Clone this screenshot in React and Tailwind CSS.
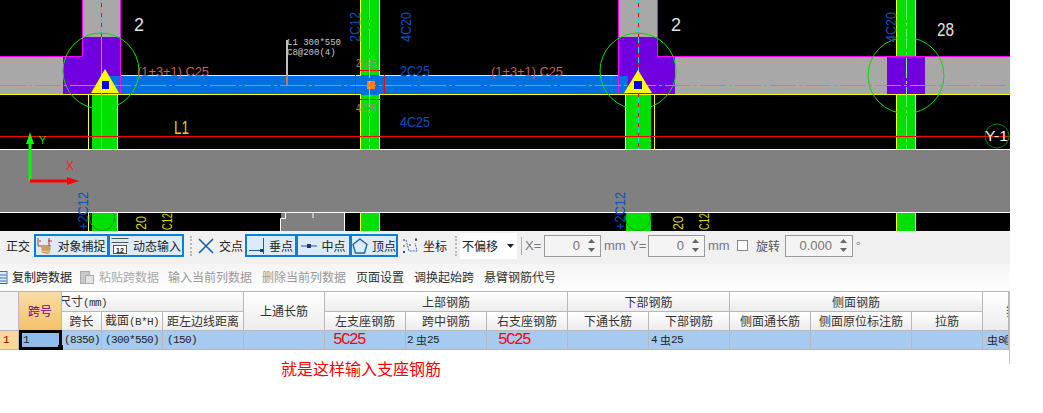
import React from 'react';

const cad = 'Liberation Sans, sans-serif';
const mono = 'Liberation Mono, monospace';

// 柱子: 绿色填充 + 黄色边线
function Column({ x, w, fx, fw, y1, y2, yl = true, yr = true }) {
  return (
    <g>
      <rect x={fx} y={y1} width={fw} height={y2 - y1} fill="#00e000" />
      {yl && <line x1={x + 0.5} y1={y1} x2={x + 0.5} y2={y2} stroke="#ffff00" />}
      {yr && <line x1={x + w + 0.5} y1={y1} x2={x + w + 0.5} y2={y2} stroke="#ffff00" />}
    </g>
  );
}

function Vtext({ x, y, fill, size = 14, len, children }) {
  return (
    <text transform={`translate(${x} ${y}) rotate(-90)`} fill={fill} fontSize={size} fontFamily={cad} textLength={len} lengthAdjust="spacingAndGlyphs">{children}</text>
  );
}

function Htext({ x, y, fill, size, len, children }) {
  return (
    <text x={x} y={y} fill={fill} fontSize={size} fontFamily={cad} textLength={len} lengthAdjust="spacingAndGlyphs">{children}</text>
  );
}

function Canvas() {
  return (
    <svg width="1010" height="231" viewBox="0 0 1010 231" className="block shrink-0">
      <rect width="1010" height="231" fill="#000" />

      {/* 灰色梁 */}
      <rect x="0" y="57" width="63" height="37" fill="#a8a8a8" />
      <rect x="675" y="57" width="335" height="37" fill="#a8a8a8" />
      <rect x="83" y="0" width="37" height="37" fill="#a8a8a8" />
      <rect x="618" y="0" width="39" height="37" fill="#a8a8a8" />

      {/* 柱 */}
      <Column x={88} w={29} fx={92} fw={26} y1={95} y2={149} />
      <Column x={360} w={19} fx={360} fw={20} y1={0} y2={76} />
      <Column x={360} w={19} fx={360} fw={20} y1={94} y2={149} />
      <Column x={625} w={29} fx={626} fw={25} y1={95} y2={149} />
      <Column x={896} w={19} fx={896} fw={20} y1={0} y2={56} />
      <Column x={896} w={19} fx={896} fw={20} y1={95} y2={149} />

      {/* 蓝色梁 */}
      <rect x="108" y="76" width="510" height="18" fill="#0070e0" />
      <line x1="120" y1="75.5" x2="618" y2="75.5" stroke="#ffff00" />

      {/* 紫色支座 */}
      <path d="M83 37H120V76H108V94H63V57H83Z" fill="#7000e0" />
      <path d="M618 37H657V56H675V94H618Z" fill="#7000e0" />
      <rect x="618" y="76" width="10" height="18" fill="#0070e0" />
      <rect x="887" y="57" width="38" height="37" fill="#7000e0" />

      {/* 洋红边线 */}
      <path d="M0 56.5H82.5V0M120.5 0V94" fill="none" stroke="#ff00ff" />
      <path d="M618.5 0V94.5H675.5M657.5 0V56.5H1010" fill="none" stroke="#ff00ff" />

      <line x1="0" y1="94.5" x2="1010" y2="94.5" stroke="#ffff00" />
      <rect x="361" y="75" width="18" height="20" fill="#0070e0" />

      {/* 跨中支座红线 */}
      <path d="M355.5 75V94M384.5 75V94M360 70.5H380M360 99.5H380" stroke="#ff0000" fill="none" />
      <rect x="367" y="81" width="8" height="8" fill="#ff8020" />

      {/* 轴线 */}
      <line x1="0" y1="85.5" x2="1010" y2="85.5" stroke="#00ff00" strokeDasharray="26 3 3 3" />
      <line x1="369.5" y1="0" x2="369.5" y2="149" stroke="#70ff70" strokeDasharray="20 3 3 3" />
      <line x1="906.5" y1="0" x2="906.5" y2="149" stroke="#70ff70" strokeDasharray="20 3 3 3" />
      <line x1="101.5" y1="0" x2="101.5" y2="149" stroke="#00e0e0" />
      <line x1="638.5" y1="0" x2="638.5" y2="149" stroke="#00e0e0" />
      <line x1="101.5" y1="3" x2="101.5" y2="37" stroke="#ff0000" strokeDasharray="4 6" />
      <line x1="638.5" y1="3" x2="638.5" y2="149" stroke="#ff0000" strokeDasharray="4 6" />

      <line x1="0" y1="136.5" x2="1010" y2="136.5" stroke="#ff0000" />

      {/* 三角形标记 */}
      <path d="M105 69L119 93H91Z" fill="#ffff00" />
      <rect x="102" y="81" width="7" height="8" fill="#0000e0" />
      <path d="M638 70L652 93H624Z" fill="#ffff00" />
      <rect x="634" y="81" width="8" height="8" fill="#0000e0" />

      {/* 圆圈 */}
      <circle cx="101" cy="71" r="38" fill="none" stroke="#00e000" />
      <circle cx="638" cy="71" r="38" fill="none" stroke="#00e000" />
      <circle cx="906" cy="75.5" r="38" fill="none" stroke="#00e000" />
      <circle cx="997" cy="136" r="12" fill="none" stroke="#008000" />

      {/* 引线 */}
      <line x1="287" y1="40" x2="287" y2="75" stroke="#ffffff" strokeWidth="1.5" />
      <line x1="287" y1="75" x2="287" y2="85" stroke="#ff8020" strokeWidth="1.5" />

      {/* 底部柱 */}
      <Column x={88} w={29} fx={92} fw={26} y1={213} y2={231} />
      <Column x={360} w={19} fx={360} fw={20} y1={213} y2={231} />
      <Column x={625} w={29} fx={626} fw={25} y1={213} y2={231} yl={false} yr={false} />
      <Column x={896} w={19} fx={896} fw={20} y1={213} y2={231} />
      <circle cx="102" cy="218" r="12.5" fill="none" stroke="#00a000" />
      <circle cx="638" cy="218" r="12.5" fill="none" stroke="#00a000" />

      {/* 灰色带 */}
      <rect x="0" y="150" width="1010" height="62" fill="#808080" />
      <line x1="0" y1="149.5" x2="1010" y2="149.5" stroke="#fff" />
      <line x1="0" y1="212.5" x2="1010" y2="212.5" stroke="#fff" />
      <rect x="281" y="213" width="63" height="18" fill="#808080" />
      <path d="M280.5 231V218.5H285.5V213M313 213V218M344.5 213V231" stroke="#fff" fill="none" />

      {/* 坐标系 */}
      <line x1="30" y1="181" x2="30" y2="142" stroke="#00ff00" strokeWidth="3" />
      <path d="M30 132L34 144H26Z" fill="#00ff00" />
      <line x1="30" y1="181" x2="68" y2="181" stroke="#ff0000" strokeWidth="3" />
      <path d="M79 181L67 177V185Z" fill="#ff0000" />
      <text x="39" y="144" fontSize="11" fill="#00e000" fontFamily={cad}>Y</text>
      <text x="66" y="170" fontSize="12" fill="#ff2020" fontFamily={cad}>X</text>

      {/* 文字 */}
      <Htext x={134} y={31} size={18} fill="#e0e0e0">2</Htext>
      <Htext x={671} y={31} size={18} fill="#e0e0e0">2</Htext>
      <Htext x={937} y={36} size={18} fill="#e0e0e0" len={17}>28</Htext>
      <Htext x={174} y={134} size={18} fill="#d8d800" len={15}>L1</Htext>
      <Htext x={137} y={76} size={13} fill="#c86060" len={72}>(1+3+1) C25</Htext>
      <Htext x={491} y={76} size={13} fill="#c86060" len={72}>(1+3+1) C25</Htext>
      <text x="287" y="45" fontSize="9" fill="#c8c8c8" fontFamily={mono}>L1 300*550</text>
      <text x="287" y="55" fontSize="9" fill="#c8c8c8" fontFamily={mono}>C8@200(4)</text>
      <Htext x={400} y={76} size={14} fill="#0a50c0" len={30}>2C25</Htext>
      <Htext x={400} y={127} size={14} fill="#0a50c0" len={30}>4C25</Htext>
      <Htext x={356} y={67} size={10} fill="#909090" len={20}>2C25</Htext>
      <Htext x={356} y={112} size={10} fill="#909090" len={20}>4C25</Htext>
      <Vtext x={360} y={42} fill="#0a50c0" len={30}>2C12</Vtext>
      <Vtext x={411} y={42} fill="#0a50c0" len={30}>4C20</Vtext>
      <Vtext x={896} y={42} fill="#0a50c0" len={30}>4C20</Vtext>
      <Vtext x={88} y={230} fill="#0a50c0" len={38}>+2C12</Vtext>
      <Vtext x={625} y={230} fill="#0a50c0" len={38}>+2C12</Vtext>
      <Vtext x={146} y={230} fill="#d8d800" len={14}>20</Vtext>
      <Vtext x={683} y={230} fill="#d8d800" len={14}>20</Vtext>
      <Vtext x={172} y={230} fill="#d8d800" len={17}>C12</Vtext>
      <Vtext x={709} y={230} fill="#d8d800" len={17}>C12</Vtext>
      <Htext x={985} y={141} size={14} fill="#f0f0f0" len={23}>Y-1</Htext>
    </svg>
  );
}

// 工具栏图标
const IconSnap = () => (
  <svg width="16" height="18" viewBox="0 0 16 18">
    <path d="M1 1V9M2 4H4M12 1V9M11 4H15M1 9H14" stroke="#a04030" fill="none" />
    <path d="M4 9L9 8L14 11L12 17L5 16Z" fill="#c8a060" />
    <path d="M5 14L12 15" stroke="#e8d0a0" />
  </svg>
);
const IconInput = () => (
  <svg width="18" height="18" viewBox="0 0 18 18">
    <path d="M0.5 1.5H17.5M0.5 5.5H17.5" stroke="#555" fill="none" />
    <rect x="2.5" y="8.5" width="13" height="8" fill="#fff" stroke="#555" />
    <text x="5" y="15.5" fontSize="7" fill="#111" fontFamily={cad} fontWeight="bold">12</text>
  </svg>
);
const IconCross = () => (
  <svg width="16" height="16" viewBox="0 0 16 16">
    <path d="M1 1L15 15M15 1L1 15" stroke="#1060b0" strokeWidth="1.6" />
  </svg>
);
const IconPerp = () => (
  <svg width="16" height="18" viewBox="0 0 16 18">
    <path d="M0 13.5H15M14.5 1V17" stroke="#1a5aa0" fill="none" />
    <rect x="11" y="12" width="3" height="3" fill="#1a3a80" />
  </svg>
);
const IconMid = () => (
  <svg width="16" height="6" viewBox="0 0 16 6">
    <path d="M0 3H16" stroke="#1a5aa0" />
    <rect x="6" y="1" width="4" height="4" fill="#1a3a80" />
  </svg>
);
const IconVertex = () => (
  <svg width="16" height="16" viewBox="0 0 16 16">
    <path d="M8 1L15 6.5L12.5 15H3.5L1 6.5Z" fill="none" stroke="#1a6ab0" strokeWidth="1.4" />
  </svg>
);
const IconCoord = () => (
  <svg width="17" height="18" viewBox="0 0 17 18">
    <path d="M4 3L7 14H15L13 6" fill="none" stroke="#2070c0" strokeDasharray="2 1" />
    <path d="M1 3H3M1 9H3M1 15H3M14 1V3M7 8H9" stroke="#333" />
    <circle cx="14" cy="3" r="1" fill="#333" />
    <circle cx="2" cy="15" r="1" fill="#333" />
  </svg>
);
const IconCopy = () => (
  <svg width="8" height="13" viewBox="0 0 8 13" className="block">
    <rect x="-4" y="0.5" width="11" height="12" fill="#dfeaf8" stroke="#3a70b8" />
    <path d="M-2 4H6M-2 7H6M-2 10H6" stroke="#3a70b8" />
  </svg>
);
const IconPaste = () => (
  <svg width="14" height="14" viewBox="0 0 14 14" className="block">
    <rect x="0.5" y="1.5" width="9" height="12" fill="#c8c8c8" stroke="#aaa" />
    <rect x="5.5" y="5.5" width="8" height="8" fill="#e4e4e4" stroke="#aaa" />
  </svg>
);

function Toggle({ w, children }) {
  return (
    <div style={{ width: w }} className="h-[23px] shrink-0 flex items-center justify-center gap-[4px] whitespace-nowrap border-2 border-[#0a7fd6] bg-[#dcebf7] -ml-[1px] first:ml-0">
      {children}
    </div>
  );
}

function Spin({ w, value }) {
  return (
    <div style={{ width: w }} className="h-[22px] shrink-0 flex items-center justify-end border border-[#9a9a9a] bg-[#f4f4f4] text-[#777] pr-[3px]">
      <span className="text-[13px] [font-family:'Liberation_Sans',sans-serif]">{value}</span>
      <div className="w-[12px] ml-[5px] flex flex-col items-center gap-[5px]">
        <svg width="7" height="4" viewBox="0 0 7 4" className="block"><path d="M3.5 0L7 4H0Z" fill="#666" /></svg>
        <svg width="7" height="4" viewBox="0 0 7 4" className="block"><path d="M3.5 4L7 0H0Z" fill="#666" /></svg>
      </div>
    </div>
  );
}

const Grip = () => (
  <div className="w-[3px] h-[20px] shrink-0 border-l-2 border-dotted border-[#b8b8b8]" />
);

function Toolbar() {
  return (
    <div className="w-[1010px] h-[33px] shrink-0 flex items-center bg-[#f0f0f0] text-[12px] text-[#222] pb-[4px]">
      <span className="ml-[6px] w-[28px] shrink-0">正交</span>
      <div className="flex">
        <Toggle w={75}><IconSnap />对象捕捉</Toggle>
        <Toggle w={76}><IconInput />动态输入</Toggle>
      </div>
      <div className="ml-[6px]"><Grip /></div>
      <div className="ml-[5px] flex items-center gap-[5px] w-[46px] shrink-0"><IconCross /><span>交点</span></div>
      <div className="flex ml-[1px]">
        <Toggle w={52}><IconPerp />垂点</Toggle>
        <Toggle w={55}><IconMid />中点</Toggle>
        <Toggle w={48}><IconVertex />顶点</Toggle>
      </div>
      <div className="ml-[4px] flex items-center gap-[4px] w-[46px] shrink-0"><IconCoord /><span>坐标</span></div>
      <div className="ml-[7px]"><Grip /></div>
      <div className="ml-[2px] w-[57px] h-[26px] shrink-0 flex items-center justify-between bg-white pl-[2px] pr-[3px] text-[12px]">
        不偏移
        <svg width="7" height="4" viewBox="0 0 7 4"><path d="M0 0H7L3.5 4Z" fill="#222" /></svg>
      </div>
      <div className="ml-[4px] w-[1px] h-[18px] bg-[#aaa] shrink-0" />
      <span className="ml-[3px] w-[19px] shrink-0 text-[#777] text-[13px] [font-family:'Liberation_Sans',sans-serif]">X=</span>
      <Spin w={57} value="0" />
      <span className="ml-[3px] w-[26px] shrink-0 text-[#777] text-[13px] [font-family:'Liberation_Sans',sans-serif]">mm</span>
      <span className="w-[18px] shrink-0 text-[#777] text-[13px] [font-family:'Liberation_Sans',sans-serif]">Y=</span>
      <Spin w={57} value="0" />
      <span className="ml-[3px] w-[29px] shrink-0 text-[#777] text-[13px] [font-family:'Liberation_Sans',sans-serif]">mm</span>
      <div className="w-[11px] h-[11px] shrink-0 border border-[#888] bg-white" />
      <span className="ml-[8px] w-[29px] shrink-0 text-[#555]">旋转</span>
      <Spin w={68} value="0.000" />
      <span className="ml-[3px] text-[#777]">°</span>
    </div>
  );
}

function ActionBar() {
  return (
    <div className="w-[1010px] h-[27px] shrink-0 flex items-center bg-gradient-to-b from-[#f4f4f4] to-white text-[12px] whitespace-nowrap pb-[1px]">
      <IconCopy />
      <span className="ml-[4px] text-[#222]">复制跨数据</span>
      <div className="ml-[8px]"><IconPaste /></div>
      <span className="ml-[5px] text-[#aaa]">粘贴跨数据</span>
      <span className="ml-[9px] text-[#999]">输入当前列数据</span>
      <span className="ml-[10px] text-[#999]">删除当前列数据</span>
      <span className="ml-[10px] text-[#333]">页面设置</span>
      <span className="ml-[10px] text-[#333]">调换起始跨</span>
      <span className="ml-[10px] text-[#333]">悬臂钢筋代号</span>
    </div>
  );
}

const headCell = 'flex items-center justify-center overflow-hidden whitespace-nowrap border-r border-b border-[#b8b8b8] bg-gradient-to-b from-white to-[#ececec] text-[#333]';
const dataCell = 'flex items-center overflow-hidden whitespace-nowrap border-r border-b border-[#b8b8b8] bg-[#a6caf0] text-[#222]';
const latin = "text-[11px] tracking-[-0.6px] [font-family:'Liberation_Mono',monospace]";
const redText = "text-[#ff0000] text-[16px] tracking-[-1.6px] leading-none [font-family:'Liberation_Mono',monospace]";

const Rebar = ({ n, rest }) => (
  <span className="flex items-center">
    <span className={latin}>{n}</span>
    <span className="text-[11px] ml-[3px]">虫</span>
    <span className={latin}>{rest}</span>
  </span>
);

function BeamTable() {
  return (
    <div className="w-[1009px] border-t border-[#b8b8b8] grid grid-cols-[19px_43px_40px_61px_81px_81px_81px_81px_81px_81px_81px_81px_101px_71px_26px] grid-rows-[20px_19px_19px] text-[12px]">
      <div className="row-span-2 border-r border-b border-[#b8b8b8] bg-[#f2f2f2]" />
      <div className="row-span-2 flex items-center justify-center border-r border-b border-[#b8b8b8] bg-gradient-to-b from-[#fbdca4] to-[#f2c266] text-[#800080]">跨号</div>
      <div className={`col-span-3 ${headCell} !justify-start`}>
        <span className="-ml-[3px]">尺寸<span className={latin}>(mm)</span></span>
      </div>
      <div className={`row-span-2 ${headCell}`}>上通长筋</div>
      <div className={`col-span-3 ${headCell}`}>上部钢筋</div>
      <div className={`col-span-2 ${headCell}`}>下部钢筋</div>
      <div className={`col-span-3 ${headCell}`}>侧面钢筋</div>
      <div className={`row-span-2 ${headCell} !justify-start`}>
        <span className="ml-[23px]">箍筋</span>
      </div>

      <div className={headCell}>跨长</div>
      <div className={headCell}><span>截面<span className={latin}>(B*H)</span></span></div>
      <div className={headCell}>距左边线距离</div>
      <div className={headCell}>左支座钢筋</div>
      <div className={headCell}>跨中钢筋</div>
      <div className={headCell}>右支座钢筋</div>
      <div className={headCell}>下通长筋</div>
      <div className={headCell}>下部钢筋</div>
      <div className={headCell}>侧面通长筋</div>
      <div className={headCell}>侧面原位标注筋</div>
      <div className={headCell}>拉筋</div>

      <div className={`flex items-center pl-[3px] border-r border-b border-[#b8b8b8] bg-[#fdd89a] text-[#8b0000] ${latin}`}>1</div>
      <div className={`relative -mt-[1px] flex items-center pl-[1px] border-[3px] border-black bg-[#8ebcec] text-[#222] ${latin}`}>
        1
        <div className="absolute -right-[4px] -bottom-[3px] w-[5px] h-[5px] bg-black" />
      </div>
      <div className={`${dataCell} pl-[2px]`}><span className={latin}>(8350)</span></div>
      <div className={`${dataCell} pl-[3px]`}><span className={latin}>(300*550)</span></div>
      <div className={`${dataCell} pl-[4px]`}><span className={latin}>(150)</span></div>
      <div className={dataCell} />
      <div className={`${dataCell} pl-[8px]`}><span className={redText}>5C25</span></div>
      <div className={`${dataCell} pl-[1px]`}><Rebar n="2" rest="25" /></div>
      <div className={`${dataCell} pl-[11px]`}><span className={redText}>5C25</span></div>
      <div className={dataCell} />
      <div className={`${dataCell} pl-[2px]`}><Rebar n="4" rest="25" /></div>
      <div className={dataCell} />
      <div className={dataCell} />
      <div className={dataCell} />
      <div className={`${dataCell} pl-[4px]`}>
        <span className="text-[11px]">虫</span><span className={latin}>8@200(4)</span>
      </div>
    </div>
  );
}

export default function App() {
  return (
    <div className="w-[1043px] h-[413px] bg-white overflow-hidden flex flex-col [font-family:'Noto_Sans_CJK_SC',sans-serif]">
      <Canvas />
      <Toolbar />
      <ActionBar />
      <div className="w-[1010px] h-[73px] shrink-0 border-r border-[#c0c0c0]">
        <BeamTable />
        <div className="pl-[281px] pt-[8px] h-[14px] text-[16px] leading-[20px] text-[#ff0000] whitespace-nowrap">就是这样输入支座钢筋</div>
      </div>
    </div>
  );
}
